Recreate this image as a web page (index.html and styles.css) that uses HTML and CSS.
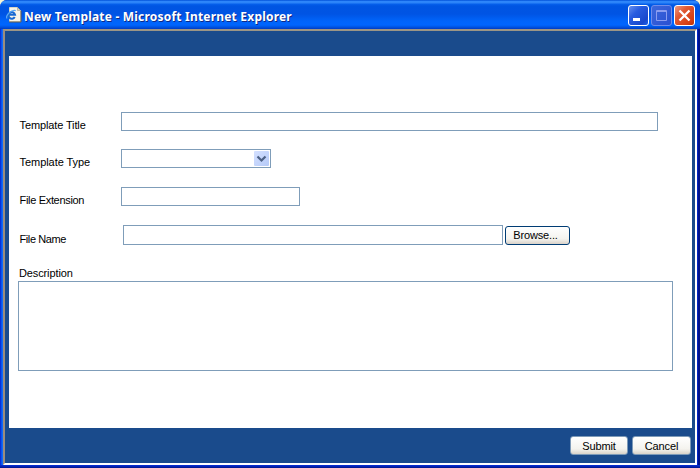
FILE: index.html
```html
<!DOCTYPE html>
<html lang="en">
<head>
<meta charset="utf-8">
<title>New Template - Microsoft Internet Explorer</title>
<link rel="stylesheet" href="styles.css">
</head>
<body>
<div class="window">
  <header class="titlebar">
    <svg class="page-icon" width="17" height="17" viewBox="0 0 17 17">
      <path d="M3.500 .5h8l3 3v11h-11z" fill="#f7f5ea" stroke="#d8d5c4"/>
      <path d="M3 15h12V4" fill="none" stroke="#665f50"/>
      <path d="M11.500 .5v3h3z" fill="#d8d4c2" stroke="#9d9a8a" stroke-width=".6"/>
      <path d="M8.700 10A3.300 3.300 0 1 1 9 7.700H3" fill="none" stroke="#1769d2" stroke-width="2"/>
      <path d="M1 11.500C-1 8.500 6 2 9.700 3.700" fill="none" stroke="#55a5f5" stroke-width="1.300"/>
    </svg>
    <h1 class="title">New Template - Microsoft Internet Explorer</h1>
    <div class="controls">
      <svg class="control minimize" viewBox="0 0 19 19"><path d="M4 12h7v3H4z" fill="#fff"/></svg>
      <svg class="control maximize" viewBox="0 0 19 19"><path d="M4.500 4.500h10v10h-10zM4 5.500h11" fill="none" stroke="#8b9df0"/></svg>
      <svg class="control close" viewBox="0 0 19 19"><path d="M4.500 4.500l10 10M14.500 4.500l-10 10" stroke="#fff" stroke-width="2.300"/></svg>
    </div>
  </header>
  <main class="client">
    <form class="panel">
      <div class="row title-row"><label>Template Title</label><div class="field"></div></div>
      <div class="row type-row"><label>Template Type</label><div class="field select">
        <svg class="arrow" width="15" height="15" viewBox="0 0 15 15"><path d="M3.500 5.500l4 4 4-4" fill="none" stroke="#4d6185" stroke-width="2.200"/></svg>
      </div></div>
      <div class="row extension-row"><label>File Extension</label><div class="field"></div></div>
      <div class="row file-row"><label>File Name</label><div class="field"></div><button type="button" class="button browse">Browse...</button></div>
      <label class="description-label">Description</label>
      <div class="field description"></div>
    </form>
    <footer class="actions">
      <button type="button" class="button submit">Submit</button>
      <button type="button" class="button cancel">Cancel</button>
    </footer>
  </main>
</div>
</body>
</html>
```
FILE: styles.css
```css
* { box-sizing: border-box; }
body { margin: 0; background: #f7f5d5; overflow: hidden; }
.window {
  width: 700px; height: 468px; display: flex; flex-direction: column;
  padding: 0 3px 3px; border-radius: 7px 7px 0 0;
  background:
    linear-gradient(#0831d9, #00138c) 0 100% / 100% 3px no-repeat,
    linear-gradient(90deg, #0831d9 0 1px, #0855ed 1px 2px, #146af5 2px 3px, #0024c4 3px 698px, #00138c 698px);
}
.titlebar {
  height: 29px; flex: none; margin: 0 -3px; padding: 5px 5px 0 6px; display: flex;
  border-radius: 7px 7px 0 0;
  background: linear-gradient(#0050d8 0, #2e86fa 1.500px, #2b83f8 3px, #0660ec 4px, #0055e2 6px, #0054e4 14px, #0064fa 21px, #0065fe 25px, #0054e2 27px, #003bc4 29px);
}
.page-icon { display: block; margin-top: 2px; flex: none; }
.title {
  margin: 3px 0 0 1px; color: #fff; white-space: nowrap;
  font: bold 12px/18px "Noto Sans", sans-serif; letter-spacing: .2px;
  text-shadow: 1px 1px 0 #102a86;
}
.controls { display: flex; gap: 2px; margin-left: auto; }
.control {
  display: block; width: 21px; height: 21px; border: 1px solid #fff; border-radius: 3px;
  background: linear-gradient(135deg, #6790ee, #285ce0 35%, #1847cc 80%, #1f64ec);
}
.maximize { border-color: #708cea; background: linear-gradient(135deg, #3c67dc, #2a50d1); }
.close { background: linear-gradient(135deg, #ee9a82, #e05a34 35%, #d63e12 80%, #b53409); }
.client {
  flex: 1; min-height: 0; display: flex; flex-direction: column; padding: 25px 3px 0 4px;
  background: #1a4b8c; border: 2px solid #fff;
  border-left-color: #9c8d7d; border-top-color: #9c9585;
}
.panel { height: 372px; flex: none; margin: 0; padding: 56px 0 0 9px; background: #fff; }
.row { display: flex; }
label, .button {
  font: 11px/14px "Liberation Sans", sans-serif; color: #000; white-space: nowrap;
}
label { letter-spacing: -.12px; }
.row label { width: 103px; padding: 6px 0 0 1.500px; flex: none; }
.field { height: 19px; border: 1px solid #7f9db9; background: #fff; flex: none; }
.title-row { height: 37px; }
.title-row .field { width: 537px; }
.type-row { height: 38px; }
.type-row label { letter-spacing: -.05px; }
.extension-row { height: 38px; }
.extension-row label { letter-spacing: -.32px; }
.extension-row .field { width: 179px; }
.select { width: 150px; display: flex; justify-content: flex-end; padding: 1px; }
.arrow { display: block; border-radius: 1px; background: linear-gradient(135deg, #d4e0ff, #b5caf8); }
.file-row { height: 41px; }
.file-row label { width: 105px; padding-top: 7px; letter-spacing: -.4px; }
.file-row .field { width: 380px; height: 20px; }
.description-label { display: block; padding-left: 1px; height: 15px; }
.description { width: 655px; height: 90px; }
.button {
  padding: 0; border: 1px solid #003c74; border-radius: 3px; text-align: center;
  background: linear-gradient(#fff, #f4f3ee 70%, #d9d2c9);
}
.browse { width: 65px; height: 19px; margin: 0 0 0 2px; padding-right: 4px; letter-spacing: -.15px; }
.file-row .browse { margin-top: .5px; }
.actions { display: flex; justify-content: flex-end; gap: 4px; padding: 8px 1px 0 0; }
.submit, .cancel { width: 59px; height: 19px; border-color: #7d9ab8; letter-spacing: -.15px; }
.submit { width: 58px; }
```
